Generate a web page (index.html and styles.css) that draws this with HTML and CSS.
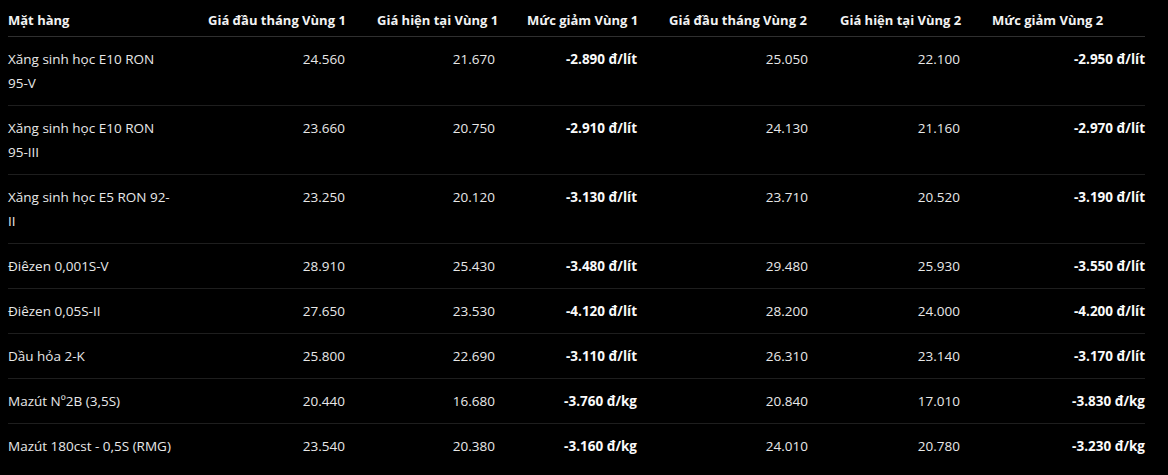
FILE: index.html
```html
<!DOCTYPE html>
<html lang="vi">
<head>
<meta charset="utf-8">
<link rel="stylesheet" href="styles.css">
</head>
<body>
<div class="wrap">
<table class="price-table">
  <colgroup>
    <col class="c-name"><col class="c-a"><col class="c-b"><col class="c-c"><col class="c-d"><col class="c-e"><col class="c-f">
  </colgroup>
  <thead>
    <tr>
      <th class="left">Mặt hàng</th>
      <th>Giá đầu tháng Vùng 1</th>
      <th>Giá hiện tại Vùng 1</th>
      <th>Mức giảm Vùng 1</th>
      <th>Giá đầu tháng Vùng 2</th>
      <th>Giá hiện tại Vùng 2</th>
      <th>Mức giảm Vùng 2</th>
    </tr>
  </thead>
  <tbody>
    <tr><td class="left">Xăng sinh học E10 RON 95-V</td><td>24.560</td><td>21.670</td><td><b>-2.890 đ/lít</b></td><td>25.050</td><td>22.100</td><td><b>-2.950 đ/lít</b></td></tr>
    <tr><td class="left">Xăng sinh học E10 RON 95-III</td><td>23.660</td><td>20.750</td><td><b>-2.910 đ/lít</b></td><td>24.130</td><td>21.160</td><td><b>-2.970 đ/lít</b></td></tr>
    <tr><td class="left">Xăng sinh học E5 RON 92-II</td><td>23.250</td><td>20.120</td><td><b>-3.130 đ/lít</b></td><td>23.710</td><td>20.520</td><td><b>-3.190 đ/lít</b></td></tr>
    <tr><td class="left">Điêzen 0,001S-V</td><td>28.910</td><td>25.430</td><td><b>-3.480 đ/lít</b></td><td>29.480</td><td>25.930</td><td><b>-3.550 đ/lít</b></td></tr>
    <tr><td class="left">Điêzen 0,05S-II</td><td>27.650</td><td>23.530</td><td><b>-4.120 đ/lít</b></td><td>28.200</td><td>24.000</td><td><b>-4.200 đ/lít</b></td></tr>
    <tr><td class="left">Dầu hỏa 2-K</td><td>25.800</td><td>22.690</td><td><b>-3.110 đ/lít</b></td><td>26.310</td><td>23.140</td><td><b>-3.170 đ/lít</b></td></tr>
    <tr><td class="left">Mazút Nº2B (3,5S)</td><td>20.440</td><td>16.680</td><td><b>-3.760 đ/kg</b></td><td>20.840</td><td>17.010</td><td><b>-3.830 đ/kg</b></td></tr>
    <tr><td class="left">Mazút 180cst - 0,5S (RMG)</td><td>23.540</td><td>20.380</td><td><b>-3.160 đ/kg</b></td><td>24.010</td><td>20.780</td><td><b>-3.230 đ/kg</b></td></tr>
  </tbody>
</table>
</div>
</body>
</html>
```
FILE: styles.css
```css
html, body {
  margin: 0;
  background: #000;
}
.wrap {
  padding: 0 23px 0 8px;
}
.price-table {
  width: 1137px;
  border-collapse: collapse;
  table-layout: fixed;
  font-family: "Open Sans", "Noto Sans", sans-serif;
  font-size: 13.5px;
  line-height: 24px;
  color: #e8e8e8;
}
.c-name { width: 184px; }
.c-a { width: 169px; }
.c-b { width: 150px; }
.c-c { width: 142px; }
.c-d { width: 171px; }
.c-e { width: 152px; }
.c-f { width: 169px; }
.price-table th {
  font-size: 13px;
  font-weight: 700;
  color: #f2f2f2;
  text-align: left;
  padding: 8px 16px 4px 16px;
  border-bottom: 1px solid #2f2f2f;
  white-space: nowrap;
}
.price-table td {
  text-align: right;
  vertical-align: top;
  padding: 10px 16px 10px 16px;
  border-bottom: 1px solid #1e1e1e;
}
.price-table tr > :last-child { padding-right: 0; }
.price-table tbody tr:last-child td { border-bottom: none; }
.price-table .left {
  text-align: left;
  padding-left: 0;
  padding-right: 18px;
}
.price-table b {
  font-weight: 700;
  color: #fafafa;
}
```
